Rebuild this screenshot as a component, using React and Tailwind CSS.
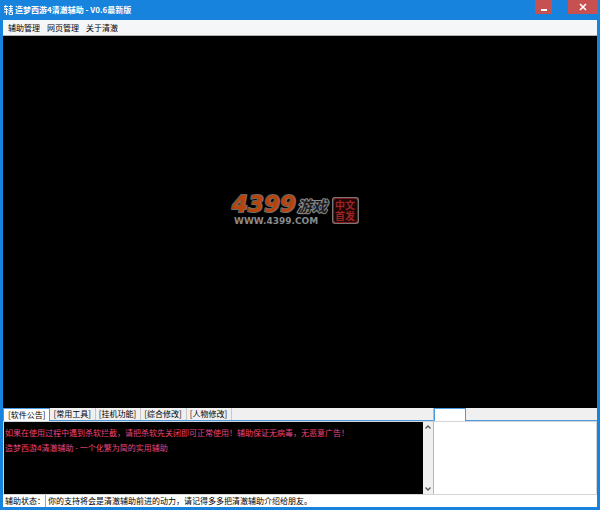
import React, { useState } from "react";

const menuItems = ["辅助管理", "网页管理", "关于清澈"];

const tabs = [
  { name: "[软件公告]", lines: [
    "如果在使用过程中遇到杀软拦截，请把杀软先关闭即可正常使用！辅助保证无病毒，无恶意广告！",
    "造梦西游4清澈辅助 - 一个化繁为简的实用辅助",
  ] },
  { name: "[常用工具]", lines: [] },
  { name: "[挂机功能]", lines: [] },
  { name: "[综合修改]", lines: [] },
  { name: "[人物修改]", lines: [] },
];

const TitleBar = () => (
  <header className="flex h-5 items-start justify-between pl-1 text-white">
    <div className="flex h-5 items-center gap-[2px]">
      <svg className="h-[10px] w-[9px]" viewBox="0 0 9 10" fill="none" stroke="#fff" aria-hidden="true">
        <path d="M0 1.5h4M1.8 0L.6 4.5h3.4M0 7h4M2.5 3v7M4.8 1.5h4M6.8 0v1.5M4.8 3.5h4M4.4 5.3h4.6M6.8 1.5v5.5M5.2 7h3.3v2.5H5.2z" />
      </svg>
      <h1 className="text-[8px] font-bold">造梦西游4清澈辅助 - V0.6最新版</h1>
    </div>
    <div className="flex">
      <button aria-label="最小化" className="mr-4 flex h-[14px] w-[17px] justify-center bg-[#c75050]">
        <svg className="h-[14px] w-[8px]" viewBox="0 0 8 14" aria-hidden="true">
          <path d="M1 9h6v2H1z" fill="#fff" />
        </svg>
      </button>
      <button aria-label="关闭" className="mr-[2px] flex h-[14px] w-[30px] items-center justify-center bg-[#c75050]">
        <svg className="h-2 w-2" viewBox="0 0 8 8" aria-hidden="true">
          <path d="M1 1l6 6M7 1L1 7" stroke="#fff" strokeWidth="1.6" />
        </svg>
      </button>
    </div>
  </header>
);

const Logo = () => (
  <svg className="h-[38px] w-[140px]" viewBox="0 -4 140 38" role="img" aria-label="4399游戏">
    <g className="font-['DejaVu_Sans','Noto_Sans_CJK_SC',sans-serif] font-bold" paintOrder="stroke" strokeLinejoin="round">
      <text x="2" y="19" fontSize="23" fontStyle="italic" fill="#b8440c" stroke="#6a6a6a" strokeWidth="2">4399</text>
      <text x="67" y="19" fontSize="15" fontStyle="italic" fill="#1c1c1c" stroke="#8a8a8a" strokeWidth="2">游戏</text>
      <text x="4" y="31" fontSize="9" fill="#8a8a8a">WWW.4399.COM</text>
      <rect x="102" y="4" width="27" height="27" rx="3" fill="#777" />
      <rect x="104" y="6" width="23" height="23" rx="2" fill="#1c0505" stroke="#7d1a1a" strokeWidth="2" />
      <text x="105" y="16" fontSize="10" fill="#9c2424">中文</text>
      <text x="105" y="27" fontSize="10" fill="#9c2424">首发</text>
    </g>
  </svg>
);

const ScrollBar = () => (
  <div className="flex w-[10px] flex-col items-center justify-between bg-[#f1f0f1] py-[3px]">
    <button aria-label="向上滚动">
      <svg className="h-1 w-[6px]" viewBox="0 0 6 4" fill="none" stroke="#555" strokeWidth="1.3" aria-hidden="true">
        <path d="M.5 3.5L3 1l2.5 2.5" />
      </svg>
    </button>
    <button aria-label="向下滚动">
      <svg className="h-1 w-[6px]" viewBox="0 0 6 4" fill="none" stroke="#555" strokeWidth="1.3" aria-hidden="true">
        <path d="M.5 .5L3 3 5.5 .5" />
      </svg>
    </button>
  </div>
);

const App = () => {
  const [active, setActive] = useState(0);

  return (
    <div className="flex min-h-screen flex-col bg-[#1883dc] font-['Noto_Sans_CJK_SC',sans-serif] text-[8px] leading-3 text-black">
      <TitleBar />
      <div className="mx-[3px] mb-[3px] flex flex-1 flex-col">
        <nav className="flex h-4 items-center gap-[7px] border-b border-[#b0b0b0] bg-[#f5f6f8] px-[5px]">
          {menuItems.map((item) => (
            <button key={item}>{item}</button>
          ))}
        </nav>

        {/* Game view */}
        <main className="flex flex-1 items-center justify-center bg-black pb-7">
          <Logo />
        </main>

        <section className="grid grid-cols-[430fr_164fr] border-b border-[#d5d5d9] bg-[#f1f0f1]">
          <div className="flex flex-col">
            <div role="tablist" className="flex h-[13px] border-b border-[#4a9ae0]">
              {tabs.map((tab, index) => (
                <button
                  key={tab.name}
                  role="tab"
                  aria-selected={index === active}
                  onClick={() => setActive(index)}
                  className={
                    index === active
                      ? "-mb-px border border-b-0 border-[#4a9ae0] bg-white px-1"
                      : "border-r border-[#c8c8c8] pr-1 pl-[3px]"
                  }
                >
                  {tab.name}
                </button>
              ))}
            </div>
            <div className="flex h-[73px] border-t border-l border-[#d5d5d9]">
              <div className="flex-1 bg-black pt-[3px] text-[#f04478]">
                {tabs[active].lines.map((line) => (
                  <p key={line} className="px-px leading-[15px]">{line}</p>
                ))}
              </div>
              <ScrollBar />
            </div>
          </div>

          <div className="flex flex-col border-l border-[#b8b8c4]">
            <div className="flex h-[13px] border-b border-[#4a9ae0]">
              <button aria-label="列表" className="-mb-px w-8 border border-b-0 border-[#4a9ae0] bg-white" />
            </div>
            <div className="flex-1 border-t border-r border-[#d5d5d9] bg-white" />
          </div>
        </section>

        <footer className="flex h-3 items-center bg-white">
          <span className="border-r border-[#6db1ec] pl-[2px]">辅助状态：</span>
          <p className="px-[2px]">你的支持将会是清澈辅助前进的动力，请记得多多把清澈辅助介绍给朋友。</p>
        </footer>
      </div>
    </div>
  );
};

export default App;
